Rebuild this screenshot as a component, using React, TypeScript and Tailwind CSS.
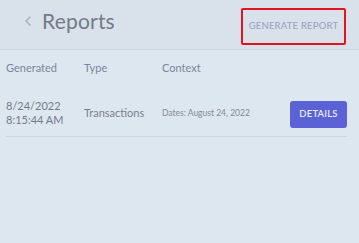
import { ChevronLeft } from 'lucide-react';

export default function App() {
  return (
    <div
      className="h-[243px] w-[359px] overflow-hidden bg-[#dde7ef] text-[#6f7784]"
      style={{ fontFamily: 'Lato, "Open Sans", sans-serif' }}
    >
      {/* Header */}
      <div className="flex h-[50px] items-start justify-between border-b border-[#cfd7e2] bg-[#d9e1ea] pl-[20px] pr-[13px]">
        <div className="mt-[8px] flex items-center gap-[6px]">
          <ChevronLeft className="h-[16px] w-[16px] text-[#a9b0bc]" strokeWidth={2.2} />
          <span className="text-[21px] leading-[26px] tracking-[0.2px] text-[#737b86]">Reports</span>
        </div>
        <button className="mt-[8px] flex h-[37px] w-[105px] items-center justify-center rounded-[2px] border-[2.5px] border-[#e3141d] text-[9.5px] font-medium tracking-[0.2px] text-[#9ca4c2]">
          GENERATE REPORT
        </button>
      </div>

      {/* Table */}
      <div className="grid grid-cols-[78px_78px_1fr_auto] pl-[6px] pr-[12px]">
        <div className="pt-[11px] text-[11px] leading-[14px] text-[#7c84a2]">Generated</div>
        <div className="pt-[11px] text-[11px] leading-[14px] text-[#7c84a2]">Type</div>
        <div className="col-span-2 pt-[11px] text-[11px] leading-[14px] text-[#7c84a2]">Context</div>

        <div className="col-span-4 mt-[22px] grid grid-cols-subgrid items-center border-b border-[#cdd6e3] pb-[8px]">
          <div className="text-[11px] leading-[14px] text-[#747b88]">
            8/24/2022
            <br />
            8:15:44 AM
          </div>
          <div className="mt-[2px] text-[11px] text-[#7a818c]">Transactions</div>
          <div className="mt-[2px] text-[8.5px] text-[#838a96]">Dates: August 24, 2022</div>
          <button className="mt-[4px] flex h-[27px] w-[57px] items-center justify-center rounded-[3px] bg-[#5a62d5] text-[9.5px] font-semibold tracking-[0.2px] text-[#e8ebff]">
            DETAILS
          </button>
        </div>
      </div>
    </div>
  );
}
